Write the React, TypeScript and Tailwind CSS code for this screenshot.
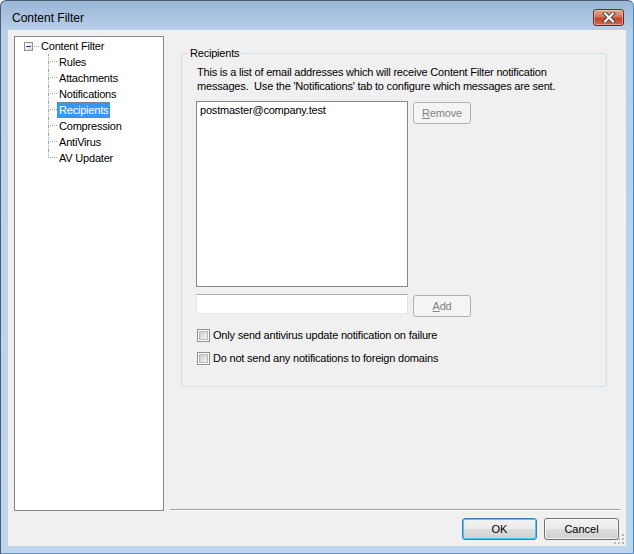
import React from 'react'

const font = { fontFamily: '"Liberation Sans", Arial, sans-serif' }

const children = ['Rules', 'Attachments', 'Notifications', 'Recipients', 'Compression', 'AntiVirus', 'AV Updater']

function TreeRow({ label, selected, last }: { label: string; selected?: boolean; last?: boolean }) {
  return (
    <div className="flex h-[16px] pl-[33px]">
      <div className="flex w-[9px] flex-col">
        <div className="h-[8px] border-b border-l border-dotted border-[#a0a0a0]" />
        {!last && <div className="h-[8px] border-l border-dotted border-[#a0a0a0]" />}
      </div>
      <span
        className={
          'h-[16px] border border-dotted px-[1px] leading-[14px] ' +
          (selected ? 'border-[#c86a1a] bg-[#3399ff] text-white' : 'border-transparent text-black')
        }
      >
        {label}
      </span>
    </div>
  )
}

function DisabledButton({ children }: { children: React.ReactNode }) {
  return (
    <button
      disabled
      className="h-[22px] w-[58px] shrink-0 rounded-[3px] border border-[#adb2b5] bg-[#f4f4f4] text-[11px] text-[#838383]"
    >
      {children}
    </button>
  )
}

function Checkbox({ label }: { label: string }) {
  return (
    <div className="flex h-[13px] items-center">
      <div className="h-[13px] w-[13px] border border-[#8f8f8f] bg-white p-[1px]">
        <div className="h-full w-full border border-[#b8b8b8] bg-[linear-gradient(135deg,#cbcbcb,#f4f4f4)]" />
      </div>
      <span className="ml-[3px] leading-[13px]">{label}</span>
    </div>
  )
}

export default function App() {
  return (
    <div
      style={font}
      className="flex h-[554px] w-[634px] flex-col rounded-t-[6px] border border-[#4a5d75] border-b-[#3fa6d6] border-r-[#3b8fc8] bg-[linear-gradient(to_bottom,#9bb6d6,#b9d0ea_30px,#bfd5ee)] text-[11px] tracking-[-0.2px] text-black"
    >
      {/* title bar */}
      <div className="flex h-[29px] shrink-0 items-start justify-between pl-[11px] pr-[9px]">
        <span className="mt-[10px] text-[12px] leading-[15px] tracking-normal">Content Filter</span>
        <div className="mt-[8px] flex h-[17px] w-[31px] items-center justify-center rounded-[3px] border border-[#6d2a20] bg-[linear-gradient(to_bottom,#e8a593,#d6735c_45%,#c2442c_55%,#d26a4d)] shadow-[inset_0_0_0_1px_rgba(255,255,255,0.35)]">
          <svg width="14" height="11" viewBox="0 0 14 11">
            <path d="M3 1.5 L11 9.5 M11 1.5 L3 9.5" stroke="#4a4a4a" strokeWidth="4" strokeLinecap="square" />
            <path d="M3 1.5 L11 9.5 M11 1.5 L3 9.5" stroke="#ffffff" strokeWidth="2" strokeLinecap="square" />
          </svg>
        </div>
      </div>

      {/* client area */}
      <div className="relative mx-[7px] mb-[7px] flex flex-1 flex-col bg-[#f0f0f0] px-[6px] pt-[6px]">
        <div className="flex">
          {/* tree */}
          <div className="h-[475px] w-[150px] shrink-0 border border-[#828790] bg-white pt-[1px]">
            <div className="flex h-[16px] items-center pl-[9px]">
              <div className="flex h-[9px] w-[9px] items-center justify-center border border-[#919191] bg-[linear-gradient(135deg,#ffffff,#dcdcdc)]">
                <div className="h-[1px] w-[5px] bg-[#1f3b8f]" />
              </div>
              <div className="ml-[1px] w-[5px] border-t border-dotted border-[#a0a0a0]" />
              <span className="h-[16px] border border-transparent px-[1px] leading-[14px]">Content Filter</span>
            </div>
            {children.map((c, i) => (
              <TreeRow key={c} label={c} selected={c === 'Recipients'} last={i === children.length - 1} />
            ))}
          </div>

          {/* right pane */}
          <div className="ml-[6px] flex h-[475px] flex-1 flex-col justify-between">
            <fieldset className="ml-[11px] mr-[13px] mt-[10px] h-[341px] rounded-[3px] border border-[#d5dfe5] pl-[14px]">
              <legend className="-ml-[8px] px-[2px] leading-[14px]">Recipients</legend>
              <div className="pl-[1px] pt-[5px] leading-[14px]">
                This is a list of email addresses which will receive Content Filter notification
                <br />
                messages.&nbsp; Use the 'Notifications' tab to configure which messages are sent.
              </div>

              <div className="mt-[8px] flex items-start gap-[5px]">
                <div className="h-[186px] w-[212px] border border-[#828790] bg-white px-[3px] pt-[1px] leading-[14px]">
                  postmaster@company.test
                </div>
                <div className="pt-[1px]">
                  <DisabledButton>
                    <span className="underline">R</span>emove
                  </DisabledButton>
                </div>
              </div>

              <div className="mt-[7px] flex items-start gap-[5px]">
                <div className="h-[20px] w-[212px] border border-[#abadb3] border-b-[#e3e9ef] border-l-[#e2e3ea] border-r-[#dbdfe6] bg-white" />
                <div className="pt-[1px]">
                  <DisabledButton>
                    <span className="underline">A</span>dd
                  </DisabledButton>
                </div>
              </div>

              <div className="mt-[12px] flex flex-col gap-[10px] pl-[1px]">
                <Checkbox label="Only send antivirus update notification on failure" />
                <Checkbox label="Do not send any notifications to foreign domains" />
              </div>
            </fieldset>

            <div className="h-[2px] border-t border-b border-t-[#a0a0a0] border-b-white" />
          </div>
        </div>

        {/* buttons */}
        <div className="mt-[7px] flex justify-end gap-[7px] pr-[1px]">
          <button className="h-[22px] w-[75px] rounded-[3px] border border-[#3c7fb1] bg-[linear-gradient(to_bottom,#f2f2f2,#ebebeb_50%,#dddddd_50%,#cfcfcf)] text-[11px] tracking-normal shadow-[inset_0_0_0_1px_#48c8f5]">
            OK
          </button>
          <button className="h-[22px] w-[75px] rounded-[3px] border border-[#707070] bg-[linear-gradient(to_bottom,#f2f2f2,#ebebeb_50%,#dddddd_50%,#cfcfcf)] text-[11px] tracking-normal shadow-[inset_0_0_0_1px_rgba(255,255,255,0.7)]">
            Cancel
          </button>
        </div>

        {/* size grip */}
        <svg className="absolute bottom-[2px] right-[2px]" width="10" height="10" viewBox="0 0 10 10">
          {[
            [8, 0],
            [8, 4], [4, 4],
            [8, 8], [4, 8], [0, 8],
          ].map(([x, y]) => (
            <rect key={`${x}-${y}`} x={x} y={y} width="2" height="2" fill="#b8b8b8" />
          ))}
        </svg>
      </div>
    </div>
  )
}
